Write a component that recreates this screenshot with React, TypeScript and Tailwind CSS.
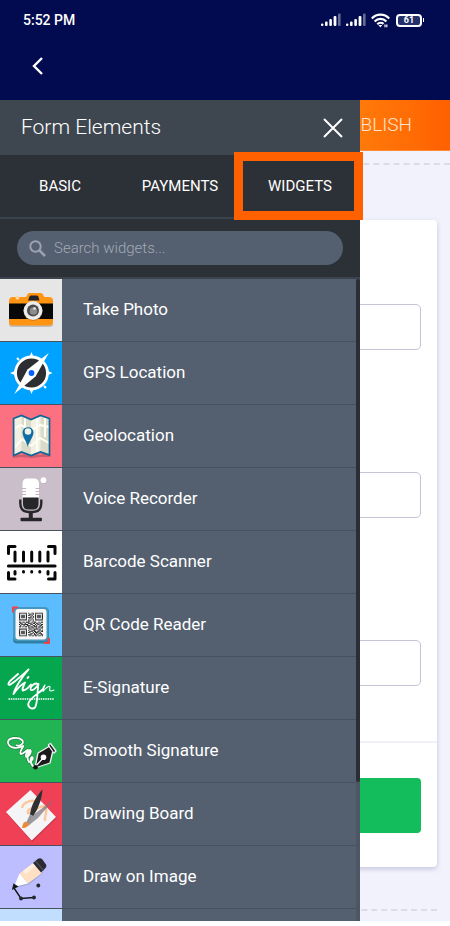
import { useState } from 'react';
import type { ReactNode } from 'react';

interface Widget {
  name: string;
  tile: string;
  icon: ReactNode;
}

const QR_ROWS = [
  '111111101001101111111',
  '100000100110101000001',
  '101110101101001011101',
  '101110100010101011101',
  '101110101110101011101',
  '100000100101001000001',
  '111111101010101111111',
  '000000001100100000000',
  '110110111001011001011',
  '011001001110110110100',
  '101111110011001011011',
  '010010011100110100110',
  '110101101011011101101',
  '000000001101100101011',
  '111111100110011110100',
  '100000101001110001101',
  '101110100111011011011',
  '101110101100101110100',
  '101110100011010101110',
  '100000101110011010011',
  '111111100101101101101',
];

function SignalIcon() {
  return (
    <svg width="20" height="14" viewBox="0 0 20 14" fill="#fff" aria-hidden="true">
      <rect x="0" y="10.5" width="2.4" height="2.5" rx="1" />
      <rect x="4" y="8.5" width="2.6" height="4.5" rx="1" />
      <rect x="8.3" y="6" width="2.6" height="7" rx="1" />
      <rect x="12.6" y="3" width="2.8" height="10" rx="1" />
      <rect x="17" y="0.5" width="2.6" height="12.5" rx="1" opacity="0.4" />
    </svg>
  );
}

function WifiIcon() {
  return (
    <svg width="19" height="15" viewBox="0 0 19 15" fill="none" stroke="#fff" strokeWidth="2.2" aria-hidden="true">
      <path d="M0.8 5.4C5.8 0.3 13.2 0.3 18.2 5.4" />
      <path d="M3.6 8.5C7 5 12 5 15.4 8.5" />
      <path d="M6.3 11.3C8.2 9.3 10.8 9.3 12.5 10.9" />
      <path d="M7.4 12L9.5 14.5L11.2 12Z" fill="#fff" stroke="none" />
      <path d="M14 14.200V11.500M15.800 11.500V14.200" strokeWidth="1.200" />
    </svg>
  );
}

function CameraArt() {
  return (
    <svg className="size-full" viewBox="0 0 62 62">
      <rect x="9" y="20" width="44" height="28" rx="3" fill="#bdbdbd" />
      <path d="M9 22Q9 18 13 18H26L28 14.5Q28.6 14 29.5 14H41Q42 14 42.6 15L44.5 18H49Q53 18 53 22V43Q53 46.500 49 46.500H13Q9 46.500 9 43Z" fill="#ff9412" />
      <rect x="9" y="24.500" width="44" height="15.500" fill="#080808" />
      <path d="M28 21.500L29.500 17.500Q30 16.500 31 16.500H36.500Q38 16.500 38.300 17.500L39.500 21.500Z" fill="#202429" />
      <circle cx="17.500" cy="18.800" r="2" fill="#f7d3a5" />
      <circle cx="33" cy="32.500" r="9.500" fill="#9c6a28" opacity="0.5" />
      <circle cx="33" cy="31.600" r="9.500" fill="#ececec" />
      <circle cx="33" cy="31.600" r="6" fill="#4b4b4b" />
      <circle cx="33.500" cy="32" r="3.800" fill="#8c8c8c" />
      <circle cx="34.500" cy="29.500" r="1.300" fill="#e8e8e8" />
    </svg>
  );
}

function CompassArt() {
  return (
    <svg className="size-full" viewBox="0 0 62 62">
      <path d="M31.500 10L34 16H29ZM31.500 52L34 46H29ZM10 31L16 28.500V33.500ZM52.500 31L47 28.500V33.500Z" fill="#fff" />
      <path d="M19 18l-2-2M44 44l2 2" stroke="#fff" strokeWidth="2" />
      <circle cx="31.500" cy="31" r="16" fill="#2d2e32" stroke="#fff" strokeWidth="2.800" />
      <path d="M48.800 11L35.500 34.500L14.300 52L27.500 27.500Z" fill="#fff" />
      <circle cx="31.500" cy="31" r="2.900" fill="#0b5fff" />
    </svg>
  );
}

function MapArt() {
  return (
    <svg className="size-full" viewBox="0 0 62 62">
      <path d="M13 48L21.500 50L31 48L40 50L50 47V52L40 52L31 53L21.500 52L13 53Z" fill="#a94f60" opacity="0.6" />
      <path d="M13.600 13.500L21.500 10.500L31 14.500L40.500 10.500L49.500 13.500V50L40.500 47L31 50.500L21.500 47L13.600 50.500Z" fill="#f1f0e2" />
      <path d="M21.500 11L31 15V50L21.500 46.500ZM40.500 11L49 14V49.500L40.500 46.500Z" fill="#dadbca" />
      <path d="M15 23L21 20L31 25L40 20L49 22M15 42L22 34L31 41L40 33L49 38M37 13V47M25 13V22M45 13V32" fill="none" stroke="#fffef5" strokeWidth="2" />
      <path d="M13.600 13.500L21.500 10.500L31 14.500L40.500 10.500L49.500 13.500V50L40.500 47L31 50.500L21.500 47L13.600 50.500Z" fill="none" stroke="#0d6698" strokeWidth="1.700" />
      <path d="M27.800 42C26.500 36 22.600 32.500 22.600 27A5.500 5.500 0 0 1 33.500 27C33.500 32.500 29.200 36 27.800 42Z" fill="#0d6da4" />
      <circle cx="28" cy="26.500" r="3.300" fill="#f0f2e5" />
    </svg>
  );
}

function MicArt() {
  return (
    <svg className="size-full" viewBox="0 0 62 62">
      <path d="M22.500 30V16Q22.500 10.500 27 10.500H34Q39 10.500 39 16V30Z" fill="#fff" />
      <path d="M22 20.500H26M22 23.500H26M22 26.500H26M35.500 20.500H39.500M35.500 23.500H39.500M35.500 26.500H39.500" stroke="#c2b5c2" />
      <path d="M23 29.500H38.500V36Q38.500 41.500 33 41.500H28.500Q23 41.500 23 36Z" fill="#27272a" />
      <path d="M20.300 31.500V35Q20.300 44 29 44H32.500Q41.300 44 41.300 35V31.500" fill="none" stroke="#27272a" strokeWidth="2.400" />
      <path d="M30.800 44V51" stroke="#27272a" strokeWidth="4" />
      <rect x="20.500" y="49.800" width="21.500" height="3.400" rx="1" fill="#27272a" />
      <circle cx="43.800" cy="12.800" r="3" fill="#a79ba7" opacity="0.5" />
      <circle cx="43.500" cy="12.200" r="2.900" fill="#fff" />
    </svg>
  );
}

function BarcodeArt() {
  return (
    <svg className="size-full" viewBox="0 0 62 62" fill="none" stroke="#080808" strokeLinecap="round" strokeWidth="3">
      <path d="M8.500 22.500V15.500H15M48.500 15.500H55V22.500M8.500 41.500V48H15M48.500 48H55V41.500" strokeLinejoin="round" />
      <path d="M15 21V30M23.500 21V30M31.700 21V30M39.800 21V30M48 21V30" />
      <path d="M15 40.500V43M23.500 40.500V41M31.700 40.500V41M39.800 40.500V41M48 40.500V43" />
      <path d="M8.500 35H55" strokeWidth="3.200" />
    </svg>
  );
}

function QrArt() {
  return (
    <svg className="size-full" viewBox="0 0 62 62">
      <rect x="13" y="14" width="36" height="35.500" rx="4" fill="#2f80a5" />
      <rect x="13" y="13" width="35.500" height="34" rx="4" fill="#4598bf" />
      <rect x="15.500" y="15" width="31" height="30.500" rx="3" fill="#f6f6f8" />
      <svg x="19" y="18.500" width="24" height="24" viewBox="0 0 21 21">
        {QR_ROWS.map((row, y) =>
          row.split('').map((bit, x) => bit === '1' && <rect key={`${x}-${y}`} x={x} y={y} width="1" height="1" fill="#222" />)
        )}
      </svg>
      <path d="M12 12.500H18V14.500H14V18.500H12ZM50 50H44V48H47.500V44H50Z" fill="#f2434c" />
    </svg>
  );
}

function SignArt() {
  return (
    <svg className="size-full" viewBox="0 0 62 62" fill="none" stroke="#fff" strokeLinecap="round" strokeLinejoin="round">
      <path d="M8.500 42H54" strokeWidth="1.600" strokeDasharray="1.500 0.800" strokeLinecap="butt" />
      <path d="M18 17C14 21 7 25 8.500 27.500C10 29.500 20 20 28.500 12.500C22 20 15 31 13.500 37C17 32 22 27 25 25.500C24 28 21.500 33 23 33.500C26 33 29 30 31 27.500" strokeWidth="1.900" />
      <path d="M27.500 21L28.500 20" strokeWidth="1.800" />
      <path d="M38 27C34 25 29 31 31 33C34 34 37 29 38.500 27C37 34 38 46 35 50.500C32 53 27 50 28.500 46C31 40 38 37 42 33" strokeWidth="1.800" />
      <path d="M42 33C43 31 44 29 45 28C44 31 42.500 34 43 34.500C46 30.500 50 28 50 30C49.500 33 48.500 35.500 54 33" strokeWidth="1.100" />
    </svg>
  );
}

function SmoothArt() {
  const stroke = 'M16 25C20 27 25 23 22 20C18 16 8 18 8 22C8 27 15 30 23 26C25 25 18 32 21 34C24 34 27 29 28 30C26 33 25 37 27 37C30 36 32 30 30 30C27 34 27 40 29 42C32 42 34 37 32 37C29 39 31 46 35 47';
  return (
    <svg className="size-full" viewBox="0 0 62 62">
      <path d={stroke} fill="none" stroke="#17813a" strokeWidth="3" />
      <path d={stroke} fill="none" stroke="#fff" strokeWidth="1.800" />
      <path d="M35 48L38 33L49 26.500L48.500 24.500L50.500 23.500L56 31L54 33L52.500 32.500L50 43Z" fill="#1b1b1d" stroke="#f2f2f2" strokeWidth="1.300" strokeLinejoin="round" />
      <path d="M48.500 25.500L53.500 32.500" stroke="#fff" strokeWidth="1.200" />
      <path d="M35 47L44 37" stroke="#fff" strokeWidth="1.200" />
      <circle cx="43.500" cy="37.300" r="2.800" fill="#fff" />
      <circle cx="35.500" cy="47.300" r="2.300" fill="#111" />
    </svg>
  );
}

function BoardArt() {
  return (
    <svg className="size-full" viewBox="0 0 62 62">
      <path d="M31 9L57 35L32 59L7 31Z" fill="#99303f" opacity="0.5" />
      <path d="M30.500 7L56 34L31.700 57.500L6 29Z" fill="#f5f5f7" />
      <path d="M22 25C23 18 37 15 37 21C37 26 26 25 28 30C32 33 43 17 46 26C47 31 44 33 45 38" fill="none" stroke="#fbc79b" strokeWidth="2.500" />
      <path d="M54.500 16L38 35L28 43L33 32Z" fill="#77757b" opacity="0.7" />
      <path d="M42.500 6.500C42 17 37 28 33 33L30 31.500C31 22 37 12 42.500 6.500Z" fill="#303033" />
      <path d="M30 31.500L33 33L29 41.500L26 40Z" fill="#929498" />
      <path d="M25.500 38.500L29.500 41C28 44 25 45.500 22 45C22.500 42 23 39.500 25.500 38.500Z" fill="#e88c3c" />
    </svg>
  );
}

function PencilArt() {
  return (
    <svg className="size-full" viewBox="0 0 62 62">
      <path d="M14 42L21 52.500L34 51.500" fill="none" stroke="#16181b" strokeWidth="1.400" />
      <circle cx="21" cy="52.500" r="1.900" fill="#24272b" />
      <circle cx="34" cy="51.500" r="1.900" fill="#24272b" />
      <circle cx="38.300" cy="39.500" r="1.900" fill="#24272b" />
      <path d="M21 30L34 17L43 27L29 38.500L15 42Z" fill="#9196bc" opacity="0.6" />
      <path d="M19.500 27.500L33.500 17L42 27L28 37.500Z" fill="#ffe0c4" />
      <path d="M23 24.800L33.500 17L36 20L25.500 28Z" fill="#fff0df" />
      <path d="M19.500 27.500L28 37.500L14 41Z" fill="#fff" />
      <path d="M14 38.500L17 40.500L13 42.500Z" fill="#17191c" stroke="#17191c" strokeWidth="1.500" />
      <path d="M33 17L38 12.800Q40 11.500 42 13L46 18.500Q47 20.500 45.500 22L41 26.500Z" fill="#2a2c31" />
      <path d="M35.500 15L43.500 24.500" stroke="#4b4e54" strokeWidth="1.200" />
    </svg>
  );
}

const widgets: Widget[] = [
  { name: 'Take Photo', tile: 'bg-[#e6e6e6]', icon: <CameraArt /> },
  { name: 'GPS Location', tile: 'bg-[#00a2ff]', icon: <CompassArt /> },
  { name: 'Geolocation', tile: 'bg-[#fb7181]', icon: <MapArt /> },
  { name: 'Voice Recorder', tile: 'bg-[#cabecb]', icon: <MicArt /> },
  { name: 'Barcode Scanner', tile: 'bg-white', icon: <BarcodeArt /> },
  { name: 'QR Code Reader', tile: 'bg-[#5bbcff]', icon: <QrArt /> },
  { name: 'E-Signature', tile: 'bg-[#06a64f]', icon: <SignArt /> },
  { name: 'Smooth Signature', tile: 'bg-[#22b352]', icon: <SmoothArt /> },
  { name: 'Drawing Board', tile: 'bg-[#ef4056]', icon: <BoardArt /> },
  { name: 'Draw on Image', tile: 'bg-[#bcbeff]', icon: <PencilArt /> },
];

function TopBar() {
  return (
    <header className="h-[100px] shrink-0 bg-[#020b4f] text-white">
      <div className="flex h-10 items-center justify-between pl-[23px] pr-[26px]">
        <span className="text-[14px] font-medium">5:52 PM</span>
        <div className="flex items-center gap-[5px]">
          <SignalIcon />
          <SignalIcon />
          <WifiIcon />
          <div className="flex items-center gap-px pl-px">
            <span className="flex h-[13px] w-[26px] items-center justify-center rounded-[4px] border-2 border-white bg-[#26306a] text-[9px] leading-[9px] font-bold">61</span>
            <span className="h-1 w-px bg-white" />
          </div>
        </div>
      </div>
      <button type="button" aria-label="Back" className="ml-6 flex h-[52px] w-7 items-center justify-center">
        <svg width="12" height="18" viewBox="0 0 12 18" fill="none" stroke="#fff" strokeWidth="2.400">
          <path d="M10 1L2 9L10 17" />
        </svg>
      </button>
    </header>
  );
}

function FormPreview() {
  return (
    <section className="col-start-1 row-start-1 min-w-0 overflow-hidden bg-[#f2f2fc]">
      <div className="flex h-[51px] items-center justify-end border-b border-[#ff8a3c] bg-linear-to-r from-[#ff7a0a] from-80% to-[#ff6000] pr-[38px]">
        <button type="button" className="text-[19px] font-light text-[#ffe3cf]">PUBLISH</button>
      </div>
      <div className="mt-3 border-t-2 border-dashed border-[#dcdce6]" />
      <div className="mx-[13px] mt-[55px] rounded-[4px] bg-white shadow-[0_2px_5px_#c3c6dc]">
        <div className="flex h-[521px] flex-col gap-[122px] px-4 pt-[84px]">
          <input aria-label="First field" className="h-[46px] shrink-0 rounded-[5px] border border-[#c3c4d4]" />
          <input aria-label="Second field" className="h-[46px] shrink-0 rounded-[5px] border border-[#c3c4d4]" />
          <input aria-label="Third field" className="h-[46px] shrink-0 rounded-[5px] border border-[#c3c4d4]" />
        </div>
        <div className="border-t-2 border-[#f0f0f8] px-4 pt-[35px] pb-[34px]">
          <button type="button" aria-label="Submit" className="block h-[55px] w-full rounded-[4px] bg-[#13bd5b]" />
        </div>
      </div>
      <div className="mx-[13px] mt-[42px] border-t-2 border-dashed border-[#dcdce6]" />
    </section>
  );
}

function Drawer() {
  const [query, setQuery] = useState('');
  const shown = widgets.filter((w) => w.name.toLowerCase().includes(query.toLowerCase()));

  return (
    <aside className="z-10 col-start-1 row-start-1 flex min-h-0 w-4/5 flex-col bg-[#2c3138] text-white">
      <div className="flex h-[55px] shrink-0 items-center justify-between bg-[#3e4650] pr-4 pl-[21px]">
        <h1 className="text-[21px] font-light">Form Elements</h1>
        <button type="button" aria-label="Close">
          <svg width="22" height="22" viewBox="0 0 22 22" stroke="#fff" strokeWidth="2">
            <path d="M2 2L20 20M20 2L2 20" />
          </svg>
        </button>
      </div>
      <nav className="grid h-16 shrink-0 grid-cols-3 border-b-2 border-[#3b434e] text-[15px]">
        <button type="button">BASIC</button>
        <button type="button">PAYMENTS</button>
        <button type="button" className="relative">
          WIDGETS
          <span className="absolute -top-[3px] -right-[3px] -bottom-[3px] -left-[6px] border-9 border-[#ff6100]" />
        </button>
      </nav>
      <div className="shrink-0 border-b-2 border-[#3b434e] px-[17px] py-3">
        <label className="flex h-[34px] items-center gap-2 rounded-full bg-[#546070] pl-3">
          <svg width="17" height="17" viewBox="0 0 17 17" fill="none" stroke="#9ba1b1" strokeWidth="2">
            <circle cx="6.500" cy="6.500" r="5.200" />
            <path d="M10.500 10.500L16 16" strokeWidth="2.500" />
          </svg>
          <input
            value={query}
            onChange={(e) => setQuery(e.target.value)}
            placeholder="Search widgets..."
            aria-label="Search widgets"
            className="min-w-0 flex-1 bg-transparent text-[15px] font-light outline-none placeholder:text-[#a3a9b5]"
          />
        </label>
      </div>
      <div className="flex min-h-0 flex-1 overflow-hidden bg-[#546070]">
        <ul className="min-w-0 flex-1">
          {shown.map((w) => (
            <li key={w.name} className="h-[63px] border-b border-[#48525f]">
              <button type="button" className="flex size-full items-center gap-[21px] text-left text-[17px]">
                <span className={`size-[62px] shrink-0 ${w.tile}`}>{w.icon}</span>
                {w.name}
              </button>
            </li>
          ))}
          <li className="h-[63px]">
            <div className="size-[62px] bg-[#c2deff]" />
          </li>
        </ul>
        <div className="w-1 shrink-0 bg-[#4c5664]">
          <div className="h-[503px] rounded-full bg-[#2a2f36]" />
        </div>
      </div>
    </aside>
  );
}

export default function App() {
  return (
    <div className="flex h-screen flex-col overflow-hidden bg-white pb-[5px] font-[Roboto,sans-serif]">
      <TopBar />
      <main className="grid min-h-0 flex-1 grid-cols-1 grid-rows-[minmax(0,1fr)]">
        <FormPreview />
        <Drawer />
      </main>
    </div>
  );
}
